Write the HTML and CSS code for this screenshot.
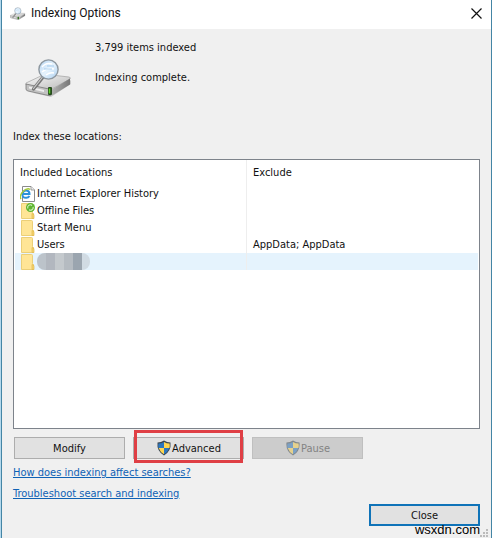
FILE: index.html
```html
<!DOCTYPE html>
<html lang="en">
<head>
    <meta charset="UTF-8">
    <meta name="viewport" content="width=device-width, initial-scale=1.0">
    <title>Indexing Options</title>
    <link rel="stylesheet" href="styles.css">
</head>
<body>

    <!-- Shared icons -->
    <svg class="defs" width="0" height="0" aria-hidden="true">
        <defs>
            <linearGradient id="metal" x1="0" y1="0" x2="1" y2="1">
                <stop offset="0" stop-color="#fafafa"/>
                <stop offset="1" stop-color="#b9b9b9"/>
            </linearGradient>
            <linearGradient id="side" x1="0" y1="0" x2="1" y2="0">
                <stop offset="0" stop-color="#b5b5b5"/>
                <stop offset="1" stop-color="#777"/>
            </linearGradient>
            <linearGradient id="glass" x1="0" y1="0" x2="1" y2="1">
                <stop offset="0" stop-color="#b4d4f2"/>
                <stop offset=".5" stop-color="#e6f3fd"/>
                <stop offset="1" stop-color="#a9cdee"/>
            </linearGradient>
            <symbol id="drive" viewBox="0 0 48 40">
                <path d="M4 33l22 5 20-13v-4L26 36z" fill="#000" opacity=".15"/>
                <path d="M1 24L18 16q2-1 4-.5L44 18q2 .5 1 2L27 30q-2 1-4 .5L2 26q-2-.5-1-2z" fill="url(#metal)" stroke="#a0a0a0" stroke-width=".7"/>
                <path d="M1 25l23 5q2 .4 2 2v4q0 1-2 .6L3 32q-2-.5-2-2z" fill="#c2c2c2" stroke="#777" stroke-width=".8"/>
                <path d="M26 31L45 19.5v6L28 36q-2 1-2-.5z" fill="url(#side)"/>
                <path d="M4 27.5l15 3.4v2L4 29.6z" fill="#eee"/>
                <rect x="23" y="28" width="4" height="8" rx="1" fill="#264b1d"/>
                <path d="M24.5 29.5v5" stroke="#5ed62c" stroke-width="1.5"/>
                <path d="M18.500 17.500L8.500 30" stroke="#777" stroke-width="3.400" stroke-linecap="round"/>
                <path d="M18 17.500L8.500 29.500" stroke="#ccc" stroke-width="1.200" stroke-linecap="round"/>
                <circle cx="23.500" cy="10.500" r="9.600" fill="url(#glass)" stroke="#8d979f" stroke-width="1.400"/>
                <path d="M17 8q4-5 10-3M17 13q6-5 12-3m-8 6q4-3 8-2" fill="none" stroke="#fff" stroke-width="1.500"/>
                <path d="M19 10h8m-5-3h7" stroke="#8abbe7" stroke-width=".7"/>
            </symbol>
            <symbol id="shield" viewBox="0 0 16 16">
                <path d="M8 .5q3 2 6.500 2Q15.500 11 8 15.500.500 11 1.500 2.500 5 2.500 8 .5z" fill="#3a4650"/>
                <path d="M8 2v6H2.500Q2 6 2.400 3.500 5.500 3.500 8 2z" fill="#2c76be"/>
                <path d="M8 2v6h5.500Q14 6 13.600 3.500 10.500 3.500 8 2z" fill="#ffd650"/>
                <path d="M2.700 8H8v6.300Q4 12 2.700 8z" fill="#ffd650"/>
                <path d="M13.300 8H8v6.300Q12 12 13.300 8z" fill="#2c76be"/>
            </symbol>
            <symbol id="folder" viewBox="0 0 16 16">
                <path d="M1.500 .5h10q1 0 1 1v8l1 1v5h-12z" fill="#ffe596" stroke="#ebcf78"/>
                <path d="M12 10.500q2 0 2 2v3h-2z" fill="#f8d56c" stroke="#dcb850" stroke-width=".7"/>
            </symbol>
            <symbol id="sync" viewBox="0 0 16 16">
                <use href="#folder"/>
                <circle cx="10.500" cy="4.500" r="4.500" fill="#5db52f"/>
                <path d="M7.900 5.500A2.600 2.600 0 0 1 12 2.500M13.100 4A2.600 2.600 0 0 1 9 6.700" fill="none" stroke="#d6f2c4" stroke-width="1.100"/>
            </symbol>
            <symbol id="ie" viewBox="0 0 16 16">
                <path d="M2.500.5h8.500l3.500 3.500v11.500h-12z" fill="#fff" stroke="#8b8b8b"/>
                <path d="M11 .5V4h3.500" fill="#eee" stroke="#8b8b8b" stroke-width=".8"/>
                <path d="M2.500 8h7q0-3.500-3.300-3.500T2.500 8.200t3.700 3.600q2.200 0 3.200-1.800" fill="none" stroke="#2c91dc" stroke-width="2"/>
                <path d="M1 13Q-1 10 3 5.500 7.500 1.500 10 3.500" fill="none" stroke="#a7c934" stroke-width="1.400"/>
            </symbol>
        </defs>
    </svg>

    <main class="window">
        <header class="titlebar">
            <svg class="title-icon"><use href="#drive"/></svg>
            <h1>Indexing Options</h1>
            <button type="button" class="close-x" aria-label="Close window">
                <svg width="11" height="11" viewBox="0 0 11 11"><path d="M.5.5l10 10m0-10l-10 10" stroke="#111" stroke-width="1.200"/></svg>
            </button>
        </header>

        <section class="status">
            <svg class="drive-icon"><use href="#drive"/></svg>
            <div class="status-text">
                <p>3,799 items indexed</p>
                <p>Indexing complete.</p>
            </div>
        </section>

        <h2 id="locations">Index these locations:</h2>

        <div class="list">
            <table aria-labelledby="locations">
                <thead>
                    <tr><th>Included Locations</th><th>Exclude</th></tr>
                </thead>
                <tbody>
                    <tr>
                        <td><div class="place"><svg class="icon"><use href="#ie"/></svg>Internet Explorer History</div></td>
                        <td></td>
                    </tr>
                    <tr>
                        <td><div class="place"><svg class="icon"><use href="#sync"/></svg>Offline Files</div></td>
                        <td></td>
                    </tr>
                    <tr>
                        <td><div class="place"><svg class="icon"><use href="#folder"/></svg>Start Menu</div></td>
                        <td></td>
                    </tr>
                    <tr>
                        <td><div class="place"><svg class="icon"><use href="#folder"/></svg>Users</div></td>
                        <td>AppData; AppData</td>
                    </tr>
                    <tr class="selected">
                        <td><div class="place"><svg class="icon"><use href="#folder"/></svg><span class="masked"></span></div></td>
                        <td></td>
                    </tr>
                </tbody>
            </table>
        </div>

        <div class="actions">
            <button type="button" class="btn">Modify</button>
            <button type="button" class="btn marked"><svg class="icon"><use href="#shield"/></svg>Advanced</button>
            <button type="button" class="btn" disabled><svg class="icon"><use href="#shield"/></svg>Pause</button>
        </div>

        <nav class="links">
            <a href="#">How does indexing affect searches?</a>
            <a href="#">Troubleshoot search and indexing</a>
        </nav>

        <footer class="footer">
            <button type="button" class="btn default">Close</button>
        </footer>

        <span class="watermark">wsxdn.com</span>
        <svg class="grip" width="8" height="8" viewBox="0 0 8 8"><path d="M6 0h2v2H6zM3 3h2v2H3zM6 3h2v2H6zM0 6h2v2H0zM3 6h2v2H3zM6 6h2v2H6z" fill="#bbb"/></svg>
    </main>

</body>
</html>
```
FILE: styles.css
```css
* {
    box-sizing: border-box;
}
body {
    margin: 0;
    padding-left: 1px;
    background-color: #b4d8ec;
    color: #111;
    font-family: Tahoma, "DejaVu Sans Condensed", "DejaVu Sans", sans-serif;
    font-size: 11px;
    line-height: 17px;
}
h1, h2, p {
    margin: 0;
    font-size: inherit;
    font-weight: normal;
}
button {
    color: inherit;
    font: inherit;
}
.defs {
    position: absolute;
}
.window {
    position: relative;
    display: flex;
    flex-direction: column;
    min-height: 100vh;
    padding-bottom: 12px;
    background-color: #f0f0f0;
    border-left: 1px solid #4485a5;
    border-right: 1px solid #4485a5;
}
.titlebar {
    display: flex;
    align-items: center;
    height: 29px;
    padding: 0 9px 2px 8px;
    background-color: #fff;
}
.titlebar h1 {
    flex: 1;
    font-family: Roboto, sans-serif;
    font-size: 12px;
}
.title-icon {
    width: 16px;
    height: 14px;
    margin-right: 5px;
}
.close-x {
    display: flex;
    padding: 0;
    border: none;
    background: none;
}
.status {
    display: flex;
    gap: 22px;
    padding: 10px 12px 0 23px;
    height: 99px;
}
.drive-icon {
    width: 48px;
    height: 40px;
    margin-top: 20px;
}
.status-text {
    display: flex;
    flex-direction: column;
    gap: 13px;
}
h2 {
    padding-left: 11px;
}
.list {
    flex: 1;
    margin: 14px 11px 0;
    padding: 0 1px;
    border: 1px solid #7d838b;
    background-color: #fff;
}
table {
    width: 100%;
    border-collapse: collapse;
    table-layout: fixed;
}
th, td {
    height: 17px;
    padding: 0 6px;
    font-weight: normal;
    text-align: left;
}
th {
    height: 25px;
}
th:first-child, td:first-child {
    padding-left: 5px;
    border-right: 1px solid #eee;
}
.place {
    display: flex;
    align-items: center;
    gap: 1px;
}
.icon {
    flex: none;
    width: 16px;
    height: 16px;
}
.selected {
    background-color: #e5f3fd;
}
.masked {
    width: 53px;
    height: 17px;
    border-radius: 8px;
    background: linear-gradient(90deg, #bcc3ca 9px, #b2b7bf 9px 18px, #c4c9cd 18px 27px, #b5bbc1 27px 36px, #9ba5af 36px 45px, #d1dbe3 45px);
}
.actions {
    display: flex;
    gap: 8px;
    padding: 8px 12px 0;
}
.btn {
    display: flex;
    align-items: center;
    justify-content: center;
    width: 111px;
    height: 22px;
    padding: 0;
    border: 1px solid #adadad;
    background-color: #e1e1e1;
}
.btn:disabled {
    border-color: #bfbfbf;
    background-color: #ccc;
    color: #838383;
}
.btn:disabled .icon {
    opacity: .5;
}
.marked {
    position: relative;
}
.marked::after {
    content: "";
    position: absolute;
    inset: -8px 0 -5px 0;
    border: 3px solid #df3f45;
}
.links {
    display: flex;
    flex-direction: column;
    align-items: flex-start;
    gap: 4px;
    padding: 5px 11px 0;
}
.links a {
    color: #0f62b5;
}
.footer {
    display: flex;
    justify-content: flex-end;
    padding: 2px 11px 0;
}
.default {
    border: 2px solid #0f73b8;
}
.watermark {
    position: absolute;
    right: 11px;
    bottom: 0;
    color: #000;
    font-family: "Liberation Sans", Arial, sans-serif;
    font-size: 13px;
}
.grip {
    position: absolute;
    right: 3px;
    bottom: 1px;
}
```
